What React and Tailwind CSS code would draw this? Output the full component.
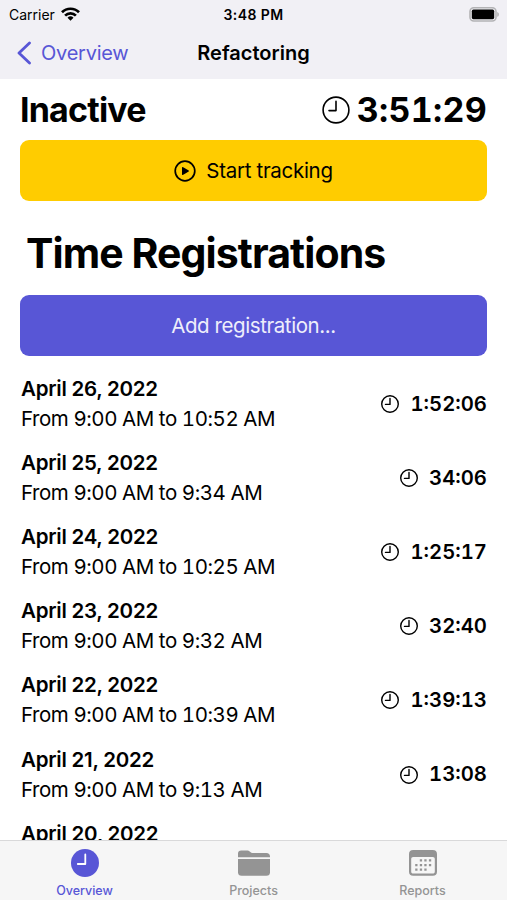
// the last entry is only partly visible above the tab bar
const registrations = [
  { date: 'April 26, 2022', from: '9:00 AM', to: '10:52 AM', duration: '1:52:06' },
  { date: 'April 25, 2022', from: '9:00 AM', to: '9:34 AM', duration: '34:06' },
  { date: 'April 24, 2022', from: '9:00 AM', to: '10:25 AM', duration: '1:25:17' },
  { date: 'April 23, 2022', from: '9:00 AM', to: '9:32 AM', duration: '32:40' },
  { date: 'April 22, 2022', from: '9:00 AM', to: '10:39 AM', duration: '1:39:13' },
  { date: 'April 21, 2022', from: '9:00 AM', to: '9:13 AM', duration: '13:08' },
  { date: 'April 20, 2022' },
];

function ClockIcon({ className, strokeWidth }) {
  return (
    <svg className={className} viewBox="0 0 28 28" fill="none" stroke="currentColor" strokeWidth={strokeWidth} strokeLinecap="round" strokeLinejoin="round">
      <circle cx="14" cy="14" r="12.9" />
      <path d="M14 5.4V14.6H7" />
    </svg>
  );
}

function StatusBar() {
  return (
    <div className="grid h-7 grid-cols-3 items-center px-[9px] text-[14px]">
      <div className="flex items-center gap-[6px]">
        <span>Carrier</span>
        <svg className="h-[14px] w-[19px]" viewBox="0 0 19 14" fill="none" stroke="currentColor" strokeWidth="2.7">
          <path d="M1 5.3a12 12 0 0 1 17 0" />
          <path d="M4.1 8.6a7.6 7.6 0 0 1 10.8 0" />
          <path d="M9.5 13.8 6.5 10.8a4.3 4.3 0 0 1 6 0Z" fill="currentColor" stroke="none" />
        </svg>
      </div>
      <span className="text-center font-semibold tracking-[0.4px]">3:48 PM</span>
      <svg className="-mr-px h-[15px] w-[30px] justify-self-end" viewBox="0 0 30 15">
        <rect x="1" y="0.8" width="26" height="13.2" rx="3.8" fill="none" stroke="#b3b3b5" strokeWidth="1.6" />
        <rect x="2.8" y="2.6" width="22.4" height="9.6" rx="1.6" fill="#000" />
        <path d="M28.2 5v4.8c1.2-.4 1.7-1.3 1.7-2.4s-.5-2-1.7-2.4Z" fill="#b3b3b5" />
      </svg>
    </div>
  );
}

function TabBar() {
  return (
    <nav className="grid h-[60px] shrink-0 grid-cols-3 border-t border-[#d9d9da] bg-[#f6f6f6] pt-[8px] text-[12.5px] font-medium text-[#949494]">
      <div className="flex flex-col items-center gap-[6px] text-[#5856d6]">
        <svg className="h-7 w-7" viewBox="0 0 28 28" fill="none">
          <circle cx="14" cy="14" r="14" fill="currentColor" />
          <path d="M14.3 5.5V15H6.8" stroke="#fff" strokeWidth="1.8" strokeLinecap="round" strokeLinejoin="round" />
        </svg>
        <span className="leading-4">Overview</span>
      </div>
      <div className="flex flex-col items-center gap-[6px]">
        <svg className="h-7 w-8" viewBox="0 0 32 28" fill="currentColor">
          <path d="M0 8.3V4.6C0 2.6 1.2 1.5 3.2 1.5h6.2c1 0 1.6.3 2.3.9l1 .8c.7.6 1.2.8 2.2.8h13.5c2.2 0 3.6 1.3 3.6 3.4v.9Z" />
          <path d="M0 10h32v13.2c0 2.3-1.3 3.6-3.6 3.6H3.6C1.3 26.8 0 25.5 0 23.2Z" />
        </svg>
        <span className="leading-4">Projects</span>
      </div>
      <div className="flex flex-col items-center gap-[6px]">
        <svg className="h-7 w-7" viewBox="0 0 28 28" fill="currentColor">
          <path fillRule="evenodd" d="M4.2 1h19.6C26.5 1 28 2.500 28 5.100v17.600c0 2.600-1.500 4.100-4.200 4.100H4.200C1.500 26.800 0 25.300 0 22.700V5.100C0 2.500 1.500 1 4.200 1ZM4.300 8C2.900 8 2.200 8.700 2.200 10v12.500c0 1.400.7 2.100 2.100 2.100h19.400c1.400 0 2.100-.7 2.100-2.100V10c0-1.300-.7-2-2.100-2Z" />
          <path d="M10.8 10.3h2.3v2.3h-2.3zM15.3 10.3h2.3v2.3h-2.3zM19.9 10.3h2.3v2.3h-2.3zM6.2 14.9h2.3v2.3H6.2zM10.8 14.9h2.3v2.3h-2.3zM15.3 14.9h2.3v2.3h-2.3zM19.9 14.9h2.3v2.3h-2.3zM6.2 19.4h2.3v2.3H6.2zM10.8 19.4h2.3v2.3h-2.3zM15.3 19.4h2.3v2.3h-2.3z" />
        </svg>
        <span className="leading-4">Reports</span>
      </div>
    </nav>
  );
}

export default function App() {
  return (
    <div className="flex h-[900px] w-[507px] flex-col overflow-hidden bg-white font-['Inter',sans-serif] text-black">
      {/* Navigation header */}
      <header className="h-[79px] shrink-0 bg-[#f1f0f5]">
        <StatusBar />
        <div className="grid h-12 grid-cols-3 items-center px-[17px] pt-px text-[20px]">
          <div className="flex items-center gap-[10px] text-[#5856d6]">
            <svg className="h-6 w-[14px]" viewBox="0 0 14 24" fill="none" stroke="currentColor" strokeWidth="2.8" strokeLinecap="round" strokeLinejoin="round">
              <path d="M12.5 2 2 12l10.5 10" />
            </svg>
            <span className="tracking-[-0.25px]">Overview</span>
          </div>
          <h1 className="text-center font-semibold">Refactoring</h1>
        </div>
      </header>

      <main className="min-h-0 flex-1 overflow-hidden px-5">
        <div className="flex h-[61px] items-center justify-between text-[34px] font-bold">
          <span className="tracking-[-0.8px]">Inactive</span>
          <div className="flex items-center gap-[7px]">
            <ClockIcon className="h-7 w-7" strokeWidth="1.6" />
            <span className="tabular-nums tracking-[0.3px]">3:51:29</span>
          </div>
        </div>
        <button className="flex h-[61px] w-full items-center justify-center gap-[10px] rounded-[9px] bg-[#ffcc00] text-[20.5px] tracking-[-0.3px]">
          <svg className="h-[22px] w-[22px]" viewBox="0 0 22 22" fill="none">
            <circle cx="11" cy="11" r="9.8" stroke="currentColor" strokeWidth="1.7" />
            <path d="M8 7.4v7.2c0 .4.4.6.8.4l5.9-3.500c.4-.3.4-.7 0-1L8.800 7c-.4-.2-.8 0-.8.4Z" fill="currentColor" />
          </svg>
          <span className="pt-[2px]">Start tracking</span>
        </button>

        <h2 className="flex h-[94px] items-center pl-[6px] pt-3 text-[41px] font-bold tracking-[-0.9px]">Time Registrations</h2>
        <button className="flex h-[61px] w-full items-center justify-center rounded-[9px] bg-[#5856d6] pt-[2px] text-[20.5px] tracking-[-0.42px] text-[#eeeefb]">
          Add registration...
        </button>

        {/* Registrations list */}
        <ul className="pl-px pt-[11px]">
          {registrations.map((item) => (
            <li key={item.date} className="flex h-[74.1px] items-center justify-between text-[20.5px]">
              <div className="h-[60px] leading-[30px]">
                <p className="font-semibold tracking-[-0.25px]">{item.date}</p>
                {item.from && (
                  <p className="tabular-nums tracking-[-0.45px]">From {item.from} to {item.to}</p>
                )}
              </div>
              {item.duration && (
                <div className="flex items-center gap-[11px] font-semibold">
                  <ClockIcon className="h-[18px] w-[18px]" strokeWidth="2.2" />
                  <span className="text-[20.3px] tabular-nums">{item.duration}</span>
                </div>
              )}
            </li>
          ))}
        </ul>
      </main>

      <TabBar />
    </div>
  );
}
